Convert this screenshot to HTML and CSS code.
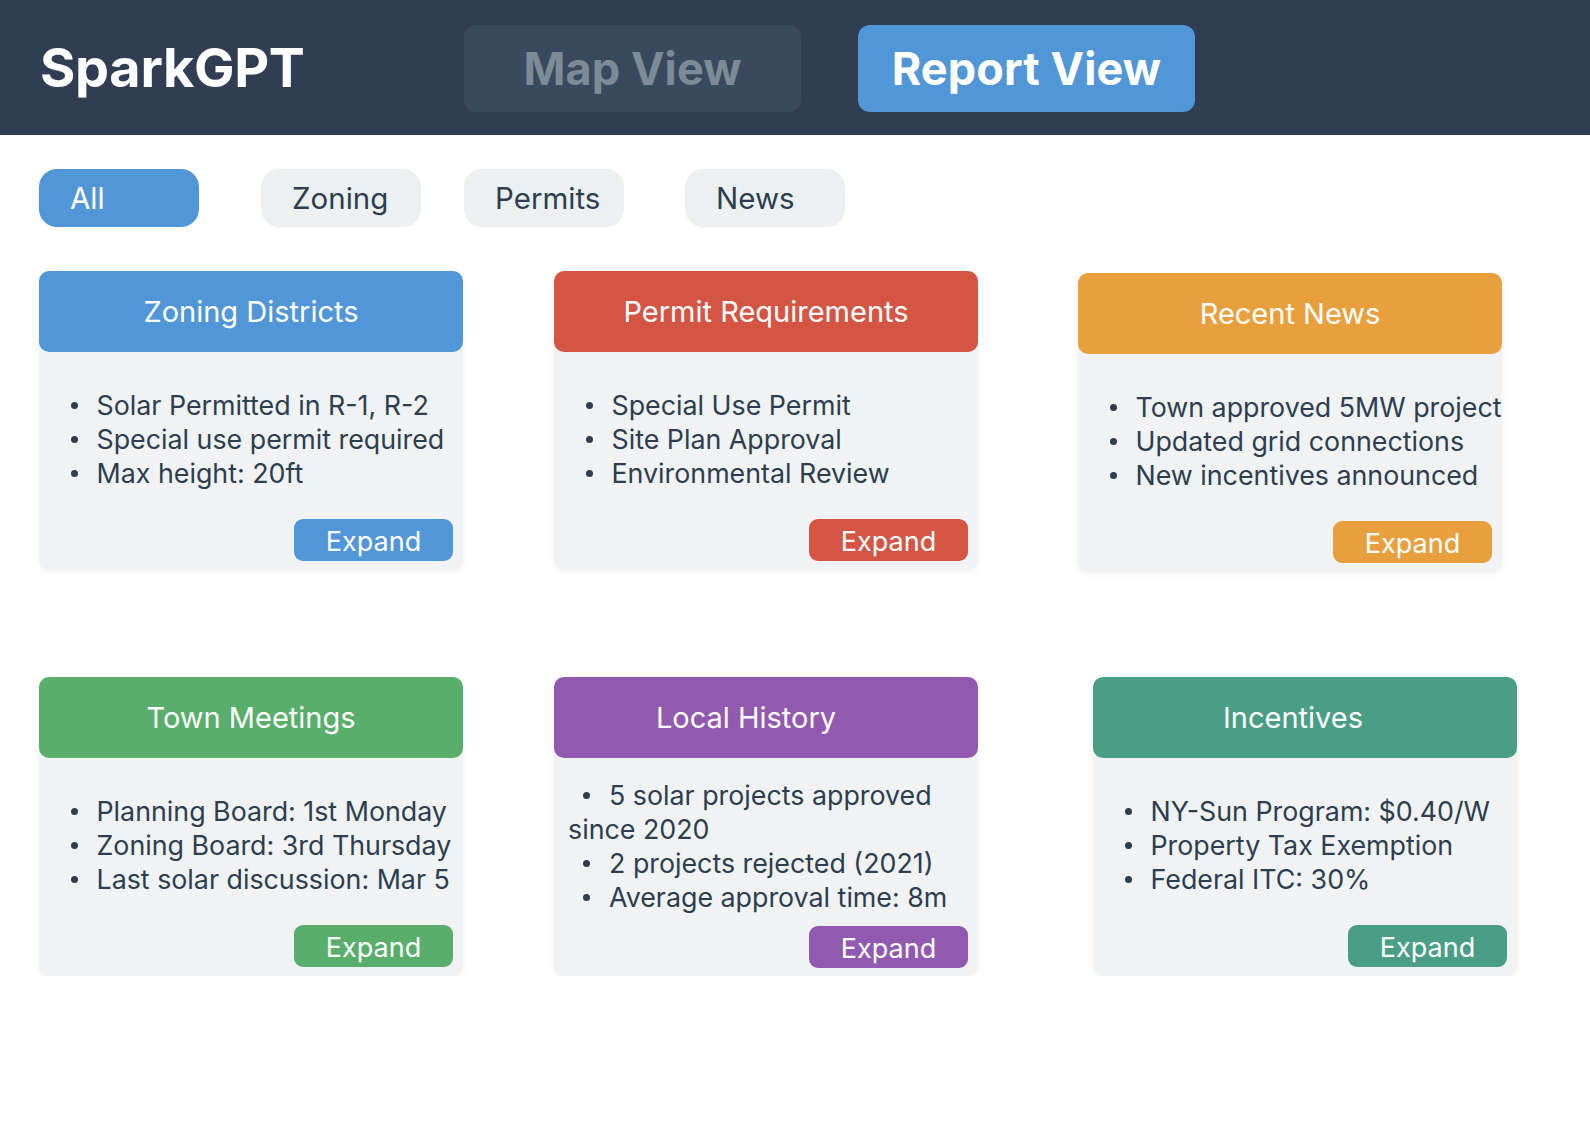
FILE: index.html
```html
<!DOCTYPE html>
<html lang="en">
<head>
<meta charset="utf-8">
<title>SparkGPT</title>
<link rel="stylesheet" href="styles.css">
</head>
<body>
<header class="topbar">
  <h1 class="brand">SparkGPT</h1>
  <nav class="views">
    <button class="view-btn">Map View</button>
    <button class="view-btn active">Report View</button>
  </nav>
</header>
<main class="content">
  <div class="filters">
    <button class="pill active">All</button>
    <button class="pill pill-zoning">Zoning</button>
    <button class="pill pill-permits">Permits</button>
    <button class="pill pill-news">News</button>
  </div>
  <section class="grid">
    <article class="card blue">
      <div class="card-head">Zoning Districts</div>
      <div class="card-body">
        <div class="list-wrap">
          <ul class="items">
            <li>Solar Permitted in R-1, R-2</li>
            <li>Special use permit required</li>
            <li>Max height: 20ft</li>
          </ul>
        </div>
        <button class="expand">Expand</button>
      </div>
    </article>
    <article class="card red">
      <div class="card-head">Permit Requirements</div>
      <div class="card-body">
        <div class="list-wrap">
          <ul class="items">
            <li>Special Use Permit</li>
            <li>Site Plan Approval</li>
            <li>Environmental Review</li>
          </ul>
        </div>
        <button class="expand">Expand</button>
      </div>
    </article>
    <article class="card orange card-news">
      <div class="card-head">Recent News</div>
      <div class="card-body">
        <div class="list-wrap">
          <ul class="items">
            <li>Town approved 5MW project</li>
            <li>Updated grid connections</li>
            <li>New incentives announced</li>
          </ul>
        </div>
        <button class="expand">Expand</button>
      </div>
    </article>
    <article class="card green">
      <div class="card-head">Town Meetings</div>
      <div class="card-body">
        <div class="list-wrap">
          <ul class="items">
            <li>Planning Board: 1st Monday</li>
            <li>Zoning Board: 3rd Thursday</li>
            <li>Last solar discussion: Mar 5</li>
          </ul>
        </div>
        <button class="expand">Expand</button>
      </div>
    </article>
    <article class="card purple">
      <div class="card-head head-history">Local History</div>
      <div class="card-body">
        <div class="list-wrap">
          <ul class="items inside">
            <li>5 solar projects approved since 2020</li>
            <li>2 projects rejected (2021)</li>
            <li>Average approval time: 8m</li>
          </ul>
        </div>
        <button class="expand">Expand</button>
      </div>
    </article>
    <article class="card teal card-incentives">
      <div class="card-head head-incentives">Incentives</div>
      <div class="card-body">
        <div class="list-wrap">
          <ul class="items">
            <li>NY-Sun Program: $0.40/W</li>
            <li>Property Tax Exemption</li>
            <li>Federal ITC: 30%</li>
          </ul>
        </div>
        <button class="expand">Expand</button>
      </div>
    </article>
  </section>
</main>
</body>
</html>
```

FILE: styles.css
```css
* { box-sizing: border-box; }

body {
  margin: 0;
  background: #ffffff;
  font-family: "Inter", "Noto Sans", "Liberation Sans", sans-serif;
  color: #2c3e50;
}

button {
  font-family: inherit;
  border: none;
  cursor: pointer;
}

.topbar {
  height: 135px;
  background: #313d52;
  display: flex;
  align-items: center;
  padding-left: 40px;
}

.brand {
  margin: 0;
  color: #ffffff;
  font-size: 54px;
  font-weight: 700;
  width: 424px;
  letter-spacing: -0.3px;
}

.views {
  display: flex;
  gap: 57px;
  margin-top: 1px;
}

.view-btn {
  width: 337px;
  height: 87px;
  border-radius: 12px;
  background: #3a4a5e;
  color: #7d8b96;
  font-size: 45px;
  font-weight: 700;
  letter-spacing: 0.1px;
}

.view-btn.active {
  background: #5196d6;
  color: #ffffff;
}

.content {
  padding: 34px 0 0 39px;
}

.filters {
  display: flex;
  height: 58px;
}

.pill {
  width: 160px;
  height: 58px;
  border-radius: 18px;
  background: #ecf0f1;
  color: #2c3e50;
  font-size: 29.5px;
  text-align: left;
  padding: 0 0 0 31px;
}

.pill.active {
  background: #5196d6;
  color: #ffffff;
}

.pill-zoning { margin-left: 62px; }
.pill-permits { margin-left: 43px; }
.pill-news { margin-left: 61px; }

.grid {
  display: grid;
  grid-template-columns: 424px 424px 424px;
  column-gap: 91px;
  row-gap: 105px;
  margin-top: 44px;
}

.card {
  width: 424px;
  height: 299px;
  background: #f1f2f3;
  border-radius: 10px;
  box-shadow: 0 2px 6px rgba(0, 0, 0, 0.06);
  display: flex;
  flex-direction: column;
}

.card-news { margin-left: 9px; margin-top: 2px; }
.card-incentives { margin-left: 24px; }

.card-head {
  height: 81px;
  flex: none;
  border-radius: 10px;
  color: #ffffff;
  font-size: 29px;
  display: flex;
  align-items: center;
  justify-content: center;
}

.head-history { padding-right: 40px; }
.head-incentives { padding-right: 24px; }

.blue .card-head, .blue .expand { background: #5196d6; }
.red .card-head, .red .expand { background: #d55545; }
.orange .card-head, .orange .expand { background: #e8a03e; }
.green .card-head, .green .expand { background: #58ae6a; }
.purple .card-head, .purple .expand { background: #9159af; }
.teal .card-head, .teal .expand { background: #4a9e86; }

.card-body {
  flex: 1;
  padding: 10px;
  display: flex;
  flex-direction: column;
}

.list-wrap {
  flex: 1;
  display: flex;
  align-items: center;
  min-height: 0;
}

.items {
  margin: 9px 0 13px;
  padding: 0 0 0 22px;
  list-style: none;
  font-size: 26.8px;
  line-height: 34px;
  color: #2c3e50;
  white-space: nowrap;
}

.items li::before {
  content: "";
  display: inline-block;
  width: 7px;
  height: 7px;
  border-radius: 50%;
  background: #2c3e50;
  margin-right: 18.5px;
  vertical-align: middle;
  position: relative;
  top: -2px;
}

.items.inside {
  margin: 10px 0 12px;
  padding: 0 0 0 4px;
  white-space: normal;
}

.items.inside li { text-indent: 15px; }

.items.inside li::before { margin-right: 19px; }

.expand {
  align-self: flex-end;
  width: 159px;
  height: 42px;
  border-radius: 9px;
  color: #ffffff;
  font-size: 27px;
  padding: 3px 0 0;
  margin-bottom: -1px;
}
```
